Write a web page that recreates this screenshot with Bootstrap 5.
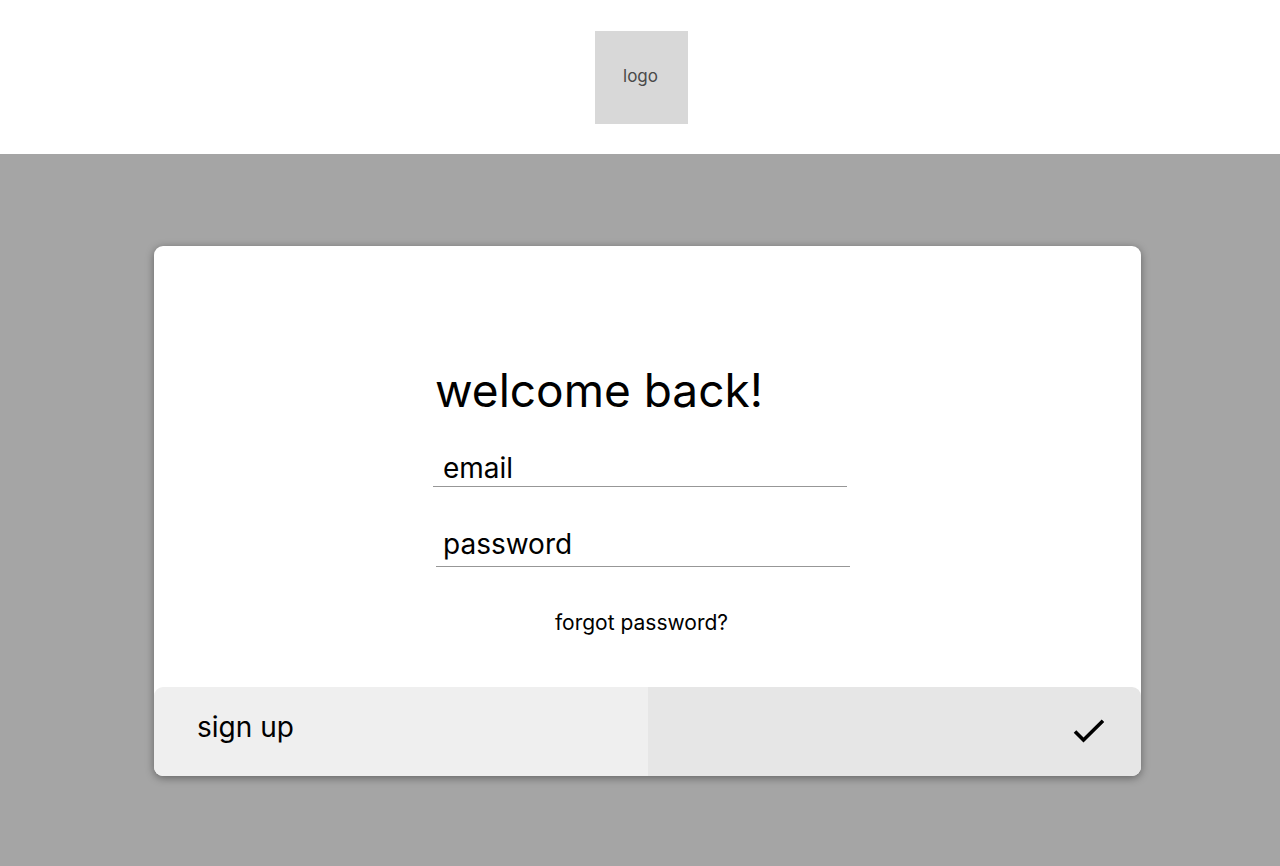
<!DOCTYPE html>
<html lang="en">
<head>
<meta charset="utf-8">
<meta name="viewport" content="width=device-width, initial-scale=1">
<title>Welcome back</title>
<link href="https://cdn.jsdelivr.net/npm/bootstrap@5.3.0/dist/css/bootstrap.min.css" rel="stylesheet">
<style>
body { font-family: Inter, "Liberation Sans", sans-serif; background: #a5a5a5; color: #000; }
.site-header { height: 154px; background: #fff; padding-left: 3px; }
.logo-box { width: 93px; height: 93px; background: #d8d8d8; color: #4a4a4a; font-size: 17px; padding: 0 2px 1px 0; }
.page-main { padding: 92px 139px 90px 154px; }
.login-card { border-radius: 9px; background: #fff; box-shadow: 0 2px 9px rgba(0,0,0,.4); }
.login-body { padding: 114px 24px 50px; }
.login-form { width: 414px; max-width: 100%; margin-right: 15px; }
.login-title { font-size: 46px; line-height: 60px; margin: 0 0 24px 2px; font-weight: 400; white-space: nowrap; }
.line-input { font-size: 28px; line-height: 36px; height: 43px; padding: 6px 10px 0; border: 0; border-bottom: 1px solid #979797; border-radius: 0; background: transparent; color: #000; box-shadow: none; }
.line-input::placeholder { color: #000; opacity: 1; }
.password-input { height: 44px; margin: 36px 0 0 3px; padding: 2px 7px 4px; }
.forgot-link { font-size: 21px; line-height: 30px; margin: 41px 0 0 3px; color: #000; }
.login-body { padding-bottom: 49px; }
.card-actions { border-radius: 9px; overflow: hidden; }
.action-btn { height: 89px; border: 0; border-radius: 0; font-size: 28px; color: #000; }
.sign-up { background: #efefef; padding: 0 43px 10px; }
.submit { background: #e6e6e6; padding: 0 36px 1px; }
</style>
</head>
<body class="min-vh-100">
<header class="site-header d-flex align-items-center justify-content-center">
  <a href="#" class="logo-box d-flex align-items-center justify-content-center text-decoration-none">logo</a>
</header>
<main class="page-main">
  <form class="login-card">
    <div class="login-body d-flex justify-content-center">
      <div class="login-form">
        <h1 class="login-title">welcome back!</h1>
        <input id="email" type="email" class="form-control line-input" placeholder="email" aria-label="email">
        <input id="password" type="password" class="form-control line-input password-input" placeholder="password" aria-label="password">
        <div class="text-center"><a href="#" class="forgot-link d-inline-block text-decoration-none">forgot password?</a></div>
      </div>
    </div>
    <div class="card-actions d-flex">
      <button type="button" class="btn action-btn sign-up w-50 text-start">sign up</button>
      <button type="submit" class="btn action-btn submit w-50 d-flex align-items-center justify-content-end" aria-label="log in">
        <svg width="32" height="24" viewBox="0 0 32 24" fill="none" stroke="#000" stroke-width="3.6" aria-hidden="true"><path d="M2 12.500L10.500 21L30 1.800"/></svg>
      </button>
    </div>
  </form>
</main>
<script src="https://cdn.jsdelivr.net/npm/bootstrap@5.3.0/dist/js/bootstrap.bundle.min.js"></script>
</body>
</html>
